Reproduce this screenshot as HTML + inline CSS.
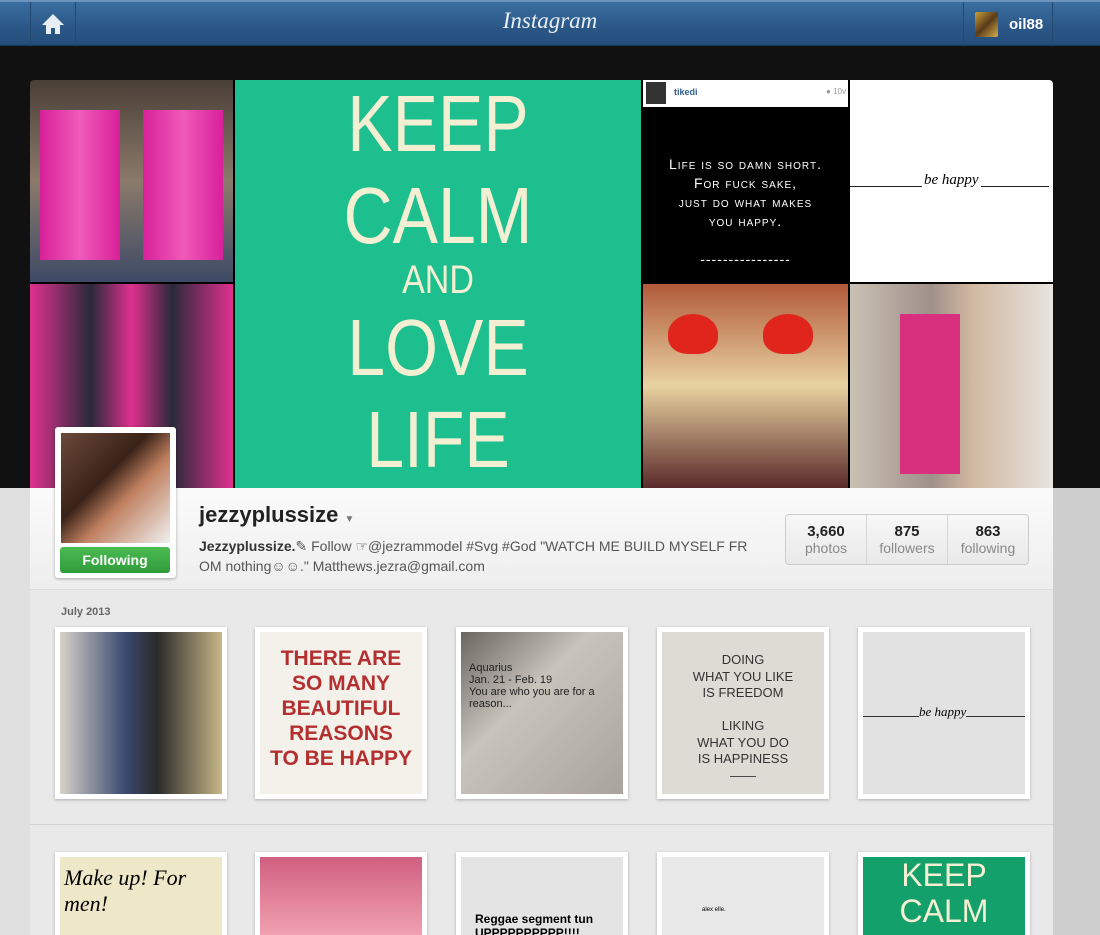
<!DOCTYPE html>
<html style="height:935px;overflow:hidden"><head><style>
*{margin:0;padding:0;box-sizing:border-box}
body{width:1100px;height:935px;overflow:hidden;background:#e6e6e6;font-family:"Liberation Sans",sans-serif;position:relative}
.a{position:absolute}
.hdr{left:0;top:0;width:1100px;height:46px;background:linear-gradient(#3b6ea0,#2a5787 60%,#244d7a);border-top:2px solid #6c93bd;border-bottom:1px solid #1a3556}
.blk{left:0;top:46px;width:1100px;height:443px;background:#111}
.t{position:absolute;overflow:hidden}
.thumb{position:absolute;background:#fff;width:172px;height:172px;padding:5px;box-shadow:0 1px 3px rgba(0,0,0,.25);overflow:hidden}
.bt{height:83px;padding-bottom:0}
.thumb>div{width:100%;height:100%;overflow:hidden;position:relative}
.kc{position:absolute;left:0;width:100%;text-align:center;transform:scaleX(.85)}
</style></head><body>
<div class="a hdr">
 <div class="a" style="left:30px;top:0;width:46px;height:44px;border-left:1px solid #24496f;border-right:1px solid #24496f"></div>
 <svg class="a" style="left:41px;top:11px" width="24" height="22" viewBox="0 0 24 22"><path d="M12 1L1 12h4v9h5v-6h4v6h5v-9h4z" fill="#e8eef5"/></svg>
 <div class="a" style="left:480px;top:6px;width:140px;text-align:center;color:#e9eef5;font-family:'Liberation Serif',serif;font-style:italic;font-size:23px">Instagram</div>
 <div class="a" style="left:963px;top:0;width:90px;height:44px;border-left:1px solid #24496f;border-right:1px solid #24496f"></div>
 <div class="a" style="left:975px;top:10px;width:23px;height:25px;background:linear-gradient(135deg,#c9a23a,#5a3a1a,#d6b04a);border-radius:2px"></div>
 <div class="a" style="left:1009px;top:14px;color:#fff;font-weight:bold;font-size:15px">oil88</div>
</div>
<div class="a blk"></div>
<div class="a" style="left:30px;top:80px;width:1023px;height:408px;background:#000;border-radius:4px 4px 0 0;overflow:hidden">
 <div class="t" style="left:0;top:0;width:203px;height:202px;background:linear-gradient(#4a3f37,#8a7a6a 50%,#3d4a66);"><div style="position:absolute;left:10px;top:30px;width:80px;height:150px;background:linear-gradient(90deg,#d8209a,#f05ab8,#d8209a)"></div><div style="position:absolute;left:113px;top:30px;width:80px;height:150px;background:linear-gradient(90deg,#d8209a,#f05ab8,#d8209a)"></div></div>
 <div class="t" style="left:0;top:204px;width:203px;height:204px;background:linear-gradient(90deg,#e0308f,#2a2a3a 30%,#e0308f 50%,#2a2a3a 70%,#e0308f)"></div>
 <div class="t" style="left:205px;top:0;width:406px;height:408px;background:#1dbf8e;color:#f3efd3">
  <div class="kc" style="top:-2px;font-size:80px">KEEP</div>
  <div class="kc" style="top:90px;font-size:80px">CALM</div>
  <div class="kc" style="top:178px;font-size:40px">AND</div>
  <div class="kc" style="top:222px;font-size:80px">LOVE</div>
  <div class="kc" style="top:314px;font-size:80px">LIFE</div>
 </div>
 <div class="t" style="left:613px;top:0;width:205px;height:202px;background:#000">
  <div style="height:27px;background:#fff;position:relative"><div style="position:absolute;left:3px;top:2px;width:20px;height:22px;background:#333"></div><div style="position:absolute;left:31px;top:7px;font-size:9px;font-weight:bold;color:#2f5e8e">tikedi</div><div style="position:absolute;right:2px;top:7px;font-size:8px;color:#999">● 10v</div></div>
  <div style="color:#fff;text-align:center;font-size:14px;line-height:19px;letter-spacing:1px;font-variant:small-caps;padding-top:48px">Life is so damn short.<br>For fuck sake,<br>just do what makes<br>you happy.<br><br>----------------</div>
 </div>
 <div class="t" style="left:820px;top:0;width:203px;height:202px;background:#fff"><div style="position:absolute;left:0;right:4px;top:106px;height:1px;background:#222"></div><div style="position:absolute;left:72px;top:92px;font-family:'Liberation Serif',serif;font-style:italic;font-size:15px;background:#fff;padding:0 2px">be happy</div></div>
 <div class="t" style="left:613px;top:204px;width:205px;height:204px;background:linear-gradient(#b25a3a,#e8d2a0 50%,#5a2a2a)"><div style="position:absolute;left:25px;top:30px;width:50px;height:40px;background:#e0261c;border-radius:50% 50% 40% 40%"></div><div style="position:absolute;left:120px;top:30px;width:50px;height:40px;background:#e0261c;border-radius:50% 50% 40% 40%"></div></div>
 <div class="t" style="left:820px;top:204px;width:203px;height:204px;background:linear-gradient(90deg,#c9c1b3,#a0908a 40%,#d0b8a0 60%,#e8e4df)"><div style="position:absolute;left:50px;top:30px;width:60px;height:160px;background:#d8307f"></div></div>
</div>
<div class="a" style="left:30px;top:488px;width:1023px;height:102px;background:linear-gradient(#fbfbfb,#eeeeee);border-bottom:1px solid #ddd"></div>
<div class="a" style="left:30px;top:590px;width:1023px;height:345px;background:#e9e9e9"></div>
<div class="a" style="left:1053px;top:488px;width:47px;height:447px;background:#cfcfcf"></div>
<div class="a" style="left:0;top:488px;width:30px;height:447px;background:#e0e0e0"></div>
<div class="a" style="left:55px;top:427px;width:121px;height:151px;background:#fff;border-radius:3px;box-shadow:0 1px 3px rgba(0,0,0,.3)"></div>
<div class="a" style="left:61px;top:433px;width:109px;height:110px;background:linear-gradient(135deg,#6a4a3a,#3a2218 40%,#c08060 60%,#f0f0f0)"></div>
<div class="a" style="left:60px;top:547px;width:110px;height:26px;background:linear-gradient(#4cbb52,#2f9c3a);border-radius:3px;color:#fff;font-weight:bold;font-size:14px;text-align:center;line-height:26px">Following</div>
<div class="a" style="left:199px;top:502px;font-size:22px;font-weight:bold;color:#222">jezzyplussize <span style="font-size:10px;color:#777">▼</span></div>
<div class="a" style="left:199px;top:536px;width:560px;font-size:14px;line-height:20px;color:#555"><b style="color:#333">Jezzyplussize.</b>✎ Follow ☞@jezrammodel #Svg #God "WATCH ME BUILD MYSELF FR OM nothing☺☺." Matthews.jezra@gmail.com</div>
<div class="a" style="left:785px;top:514px;width:244px;height:51px;background:linear-gradient(#f7f7f7,#e9e9e9);border:1px solid #ccc;border-radius:4px;display:flex;text-align:center">
 <div style="flex:1;border-right:1px solid #d6d6d6;padding-top:8px"><div style="font-weight:bold;font-size:15px;color:#222">3,660</div><div style="font-size:14px;color:#888">photos</div></div>
 <div style="flex:1;border-right:1px solid #d6d6d6;padding-top:8px"><div style="font-weight:bold;font-size:15px;color:#222">875</div><div style="font-size:14px;color:#888">followers</div></div>
 <div style="flex:1;padding-top:8px"><div style="font-weight:bold;font-size:15px;color:#222">863</div><div style="font-size:14px;color:#888">following</div></div>
</div>
<div class="a" style="left:61px;top:606px;font-size:11px;font-weight:bold;color:#666">July 2013</div>
<div class="thumb" style="left:55px;top:627px"><div style="background:linear-gradient(90deg,#d8d2c8,#3a4a70 40%,#2a2a2a 60%,#c8b888)"></div></div>
<div class="thumb" style="left:255px;top:627px"><div style="background:#f4f0ea;color:#b43030;font-weight:bold;font-size:21px;line-height:25px;text-align:center;padding-top:14px">THERE ARE<br>SO MANY<br>BEAUTIFUL<br>REASONS<br>TO BE HAPPY</div></div>
<div class="thumb" style="left:456px;top:627px"><div style="background:linear-gradient(135deg,#6a6660,#c8c4bc 40%,#a8a49c);color:#222;font-size:11px;padding:30px 8px">Aquarius<br>Jan. 21 - Feb. 19<br>You are who you are for a reason...</div></div>
<div class="thumb" style="left:657px;top:627px"><div style="background:#dedbd5;color:#333;font-size:13px;line-height:16.5px;text-align:center;padding-top:20px">DOING<br>WHAT YOU LIKE<br>IS FREEDOM<br><br>LIKING<br>WHAT YOU DO<br>IS HAPPINESS<br>——</div></div>
<div class="thumb" style="left:858px;top:627px"><div style="background:#e2e2e2"><div style="position:absolute;left:0;right:0;top:84px;height:1px;background:#333"></div><div style="position:absolute;left:56px;top:72px;font-family:'Liberation Serif',serif;font-style:italic;font-size:13px;background:#e2e2e2">be happy</div></div></div>
<div class="a" style="left:30px;top:824px;width:1023px;height:1px;background:#d4d4d4"></div>
<div class="thumb bt" style="left:55px;top:852px"><div style="background:#efe8c8;font-family:'Liberation Serif',serif;font-style:italic;font-size:22px;padding:8px 4px">Make up! For men!</div></div>
<div class="thumb bt" style="left:255px;top:852px"><div style="background:linear-gradient(#d06080,#f0a0b0)"></div></div>
<div class="thumb bt" style="left:456px;top:852px"><div style="background:#e4e4e4;font-weight:bold;font-size:12px;padding:55px 14px 0">Reggae segment tun UPPPPPPPPPP!!!!</div></div>
<div class="thumb bt" style="left:657px;top:852px"><div style="background:#e8e8e8;font-size:6px;padding:50px 0 0 40px">alex elle.</div></div>
<div class="thumb bt" style="left:858px;top:852px"><div style="background:#13a06a;color:#f3efd3;font-size:32px;line-height:36px;text-align:center">KEEP<br>CALM</div></div>
</body></html>
